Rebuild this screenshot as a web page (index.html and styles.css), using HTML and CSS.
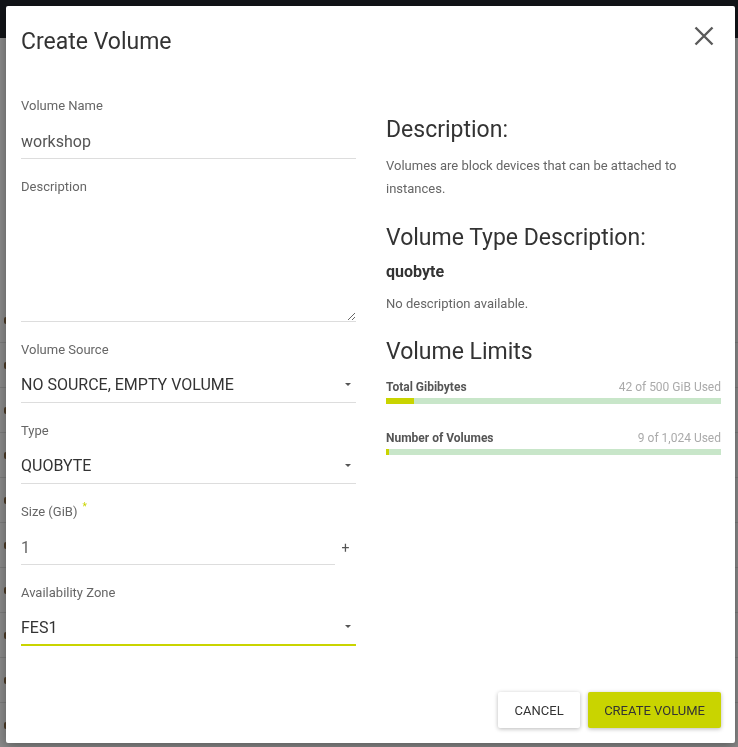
FILE: index.html
```html
<!DOCTYPE html>
<html lang="en">
<head>
<meta charset="utf-8">
<title>Create Volume</title>
<link rel="stylesheet" href="styles.css">
</head>
<body>
<div class="page">
  <div class="topbar"></div>
  <div class="rows">
    <div class="row"><span class="row-dot"></span></div>
    <div class="row"><span class="row-dot"></span></div>
    <div class="row"><span class="row-dot"></span></div>
    <div class="row"><span class="row-dot"></span></div>
    <div class="row"><span class="row-dot"></span></div>
    <div class="row"><span class="row-dot"></span></div>
    <div class="row"><span class="row-dot"></span></div>
    <div class="row"><span class="row-dot"></span></div>
    <div class="row"><span class="row-dot"></span></div>
    <div class="row"><span class="row-dot"></span></div>
  </div>
</div>

<div class="modal" role="dialog" aria-labelledby="modal-title">
  <div class="modal-header">
    <h2 class="modal-title" id="modal-title">Create Volume</h2>
    <button class="close" type="button" aria-label="Close">
      <svg width="20" height="20" viewBox="0 0 20 20" aria-hidden="true">
        <path d="M1.5 1.5 L18.5 18.5 M18.5 1.5 L1.5 18.5" stroke="#5a5a5a" stroke-width="2.4" fill="none"/>
      </svg>
    </button>
  </div>

  <div class="modal-body">
    <form class="form-col">
      <div class="field">
        <label class="field-label" for="vol-name">Volume Name</label>
        <div class="control">
          <input class="control-input" id="vol-name" type="text" value="workshop">
        </div>
      </div>

      <div class="field">
        <label class="field-label" for="vol-desc">Description</label>
        <textarea class="control-textarea" id="vol-desc"></textarea>
      </div>

      <div class="field">
        <label class="field-label" for="vol-source">Volume Source</label>
        <div class="control">
          <select class="control-select" id="vol-source">
            <option>NO SOURCE, EMPTY VOLUME</option>
          </select>
          <span class="caret"></span>
        </div>
      </div>

      <div class="field">
        <label class="field-label" for="vol-type">Type</label>
        <div class="control">
          <select class="control-select" id="vol-type">
            <option>QUOBYTE</option>
          </select>
          <span class="caret"></span>
        </div>
      </div>

      <div class="field">
        <label class="field-label" for="vol-size">Size (GiB)<span class="required">*</span></label>
        <div class="field-row">
          <div class="control control-grow">
            <input class="control-input control-number" id="vol-size" type="text" value="1">
          </div>
          <span class="stepper">+</span>
        </div>
      </div>

      <div class="field">
        <label class="field-label" for="vol-zone">Availability Zone</label>
        <div class="control is-focused">
          <select class="control-select" id="vol-zone">
            <option>FES1</option>
          </select>
          <span class="caret"></span>
        </div>
      </div>
    </form>

    <div class="info-col">
      <h3 class="info-heading">Description:</h3>
      <p class="info-text">Volumes are block devices that can be attached to instances.</p>

      <h3 class="info-heading info-heading-spaced">Volume Type Description:</h3>
      <p class="type-name">quobyte</p>
      <p class="info-text">No description available.</p>

      <h3 class="info-heading info-heading-limits">Volume Limits</h3>

      <div class="limit">
        <div class="limit-head">
          <span class="limit-label">Total Gibibytes</span>
          <span class="limit-value">42 of 500 GiB Used</span>
        </div>
        <div class="bar"><div class="bar-fill" style="width: 8.4%"></div></div>
      </div>

      <div class="limit limit-second">
        <div class="limit-head">
          <span class="limit-label">Number of Volumes</span>
          <span class="limit-value">9 of 1,024 Used</span>
        </div>
        <div class="bar"><div class="bar-fill" style="width: 0.88%"></div></div>
      </div>
    </div>
  </div>

  <div class="modal-footer">
    <button class="btn btn-cancel" type="button">Cancel</button>
    <button class="btn btn-primary" type="button">Create Volume</button>
  </div>
</div>
</body>
</html>
```

FILE: styles.css
```css
* {
  box-sizing: border-box;
}

html, body {
  margin: 0;
  padding: 0;
}

body {
  font-family: Roboto, "Noto Sans", "Liberation Sans", sans-serif;
  background: #8a8a8a;
  height: 747px;
  overflow: hidden;
}

/* background page under the modal backdrop */
.topbar {
  height: 38px;
  background: #121418;
}

.rows {
  margin-top: 260px;
}

.row {
  height: 45px;
  border-bottom: 1px solid #7b7b7b;
  display: flex;
  align-items: center;
}

.row-dot {
  width: 4px;
  height: 7px;
  margin-left: 4px;
  border-radius: 2px;
  background: #4b3a26;
}

/* modal */
.modal {
  position: fixed;
  top: 6px;
  left: 6px;
  width: 729px;
  height: 737px;
  background: #fff;
  border-radius: 2px;
  box-shadow: 0 3px 12px rgba(0, 0, 0, 0.35);
  display: flex;
  flex-direction: column;
}

.modal-header {
  display: flex;
  justify-content: space-between;
  align-items: flex-start;
  padding: 20px 21px 0 15px;
}

.modal-title {
  margin: 2px 0 0;
  font-size: 23px;
  line-height: 28px;
  font-weight: 400;
  color: #333;
}

.close {
  display: block;
  width: 20px;
  height: 20px;
  padding: 0;
  margin: 0;
  border: 0;
  background: none;
  cursor: pointer;
}

.close svg {
  display: block;
}

.modal-body {
  display: grid;
  grid-template-columns: 335px 335px;
  column-gap: 30px;
  padding: 41px 14px 0 15px;
}

/* form */
.form-col {
  margin: 0;
}

.field {
  margin-bottom: 19px;
}

.field-label {
  display: block;
  font-size: 13px;
  line-height: 18px;
  color: #666;
  margin-bottom: 10px;
}

.required {
  margin-left: 5px;
  font-size: 10px;
  line-height: 0;
  color: #c9d400;
  vertical-align: 6px;
}

.control {
  height: 34px;
  border-bottom: 1px solid #ddd;
  display: flex;
  align-items: center;
}

.control.is-focused {
  border-bottom: 2px solid #c9d400;
}

.control-input,
.control-select {
  flex: 1;
  min-width: 0;
  height: 100%;
  padding: 0;
  margin: 0;
  border: 0;
  outline: none;
  background: transparent;
  font-family: Roboto, "Noto Sans", sans-serif;
  font-size: 16px;
}

.control-input {
  color: #555;
}

.control-number {
  color: #666;
}

.control-select {
  appearance: none;
  -webkit-appearance: none;
  padding-bottom: 2px;
  color: #333;
  cursor: pointer;
}

.caret {
  width: 0;
  height: 0;
  border-left: 3px solid transparent;
  border-right: 3px solid transparent;
  border-top: 3px solid #555;
  margin: 0 5px 3px 8px;
}

.control-textarea {
  display: block;
  width: 100%;
  height: 116px;
  padding: 0;
  margin: 0;
  border: 0;
  border-bottom: 1px solid #ddd;
  outline: none;
  resize: vertical;
  font-family: Roboto, "Noto Sans", sans-serif;
  font-size: 16px;
  color: #555;
  background: transparent;
}

.field-row {
  display: flex;
  align-items: center;
}

.control-grow {
  flex: 1;
}

.stepper {
  width: 21px;
  text-align: center;
  font-size: 14px;
  color: #555;
  cursor: pointer;
}

/* info column */
.info-heading {
  margin: 19px 0 10px;
  font-size: 23px;
  line-height: 28px;
  font-weight: 400;
  color: #333;
}

.info-heading-spaced {
  margin-top: 23px;
  margin-bottom: 9px;
}

.info-heading-limits {
  margin-top: 23px;
  margin-bottom: 0;
}

.info-text {
  margin: 0;
  font-size: 13px;
  line-height: 23.4px;
  color: #666;
}

.type-name {
  margin: 0 0 9px;
  font-size: 16px;
  line-height: 22px;
  font-weight: 700;
  color: #333;
}

.limit {
  margin-top: 13px;
}

.limit-second {
  margin-top: 26px;
}

.limit-head {
  display: flex;
  justify-content: space-between;
  font-size: 12px;
  line-height: 16px;
}

.limit-label {
  font-weight: 700;
  color: #555;
}

.limit-value {
  color: #aaa;
}

.bar {
  margin-top: 3px;
  height: 6px;
  background: #c8e6c9;
}

.bar-fill {
  height: 100%;
  background: #c9d400;
}

/* footer */
.modal-footer {
  margin-top: auto;
  display: flex;
  justify-content: flex-end;
  gap: 8px;
  padding: 0 14px 15px;
}

.btn {
  height: 36px;
  padding: 0 16px;
  border: 0;
  border-radius: 2px;
  font-family: Roboto, "Noto Sans", sans-serif;
  font-size: 13px;
  text-transform: uppercase;
  color: #333;
  cursor: pointer;
  box-shadow: 0 1px 4px rgba(0, 0, 0, 0.28);
}

.btn-cancel {
  min-width: 82px;
  background: #fff;
}

.btn-primary {
  background: #c9d400;
}
```
